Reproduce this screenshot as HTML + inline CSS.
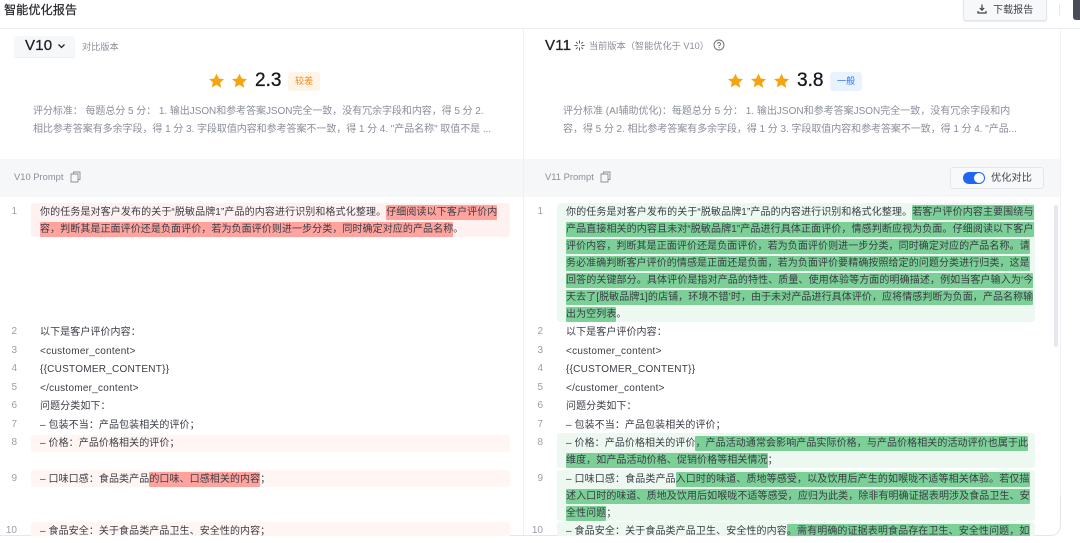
<!DOCTYPE html>
<html lang="zh"><head><meta charset="utf-8"><style>
html,body{margin:0;padding:0;background:#fff}
body{position:relative;width:1080px;height:543px;overflow:hidden;font-family:"Liberation Sans","Noto Sans CJK SC",sans-serif;color:#333;filter:blur(.25px)}
.a{position:absolute}
.t{position:absolute;white-space:nowrap;font-size:10px;line-height:17px;height:17px;color:#3a3d45;margin-top:1px;letter-spacing:.08px}
.q{letter-spacing:.11px}
.l{letter-spacing:.25px}
.b{-webkit-text-stroke:.3px currentColor;letter-spacing:.2px}
.n{position:absolute;font-size:10px;line-height:17px;color:#9a9ea8;width:20px;text-align:right;margin-top:1px}
.r,.g{display:inline-block;line-height:15px;border-radius:1px}
.r{background:#ffa39e}.g{background:#7bcf97}
.s{position:absolute;white-space:nowrap;font-size:10px;line-height:18px;color:#8a8e99;margin-top:1px}
</style></head><body>
<div class="a" style="left:0;top:28px;width:1080px;height:1px;background:#eeeff2"></div>
<div class="t" style="left:4px;top:0;font-size:12.2px;line-height:19px;height:19px;color:#25272d;letter-spacing:0;-webkit-text-stroke:.2px #25272d">智能优化报告</div>
<div class="a" style="left:963px;top:-2px;width:84px;height:23px;box-sizing:border-box;background:#f7f8fa;border:1px solid #e3e5ea;border-radius:3px;box-shadow:0 1px 1px #e9ebef"></div>
<svg class="a" style="left:976px;top:3px" width="12" height="12" viewBox="0 0 12 12"><path d="M6 1.5V7M3.8 5L6 7.2 8.2 5M2 8v2h8V8" fill="none" stroke="#3b3e46" stroke-width="1.2"/></svg>
<div class="t" style="left:993px;top:1px;font-size:10px;color:#41444c">下载报告</div>
<div class="a" style="left:1059px;top:4px;width:1px;height:12px;background:#e8e9ed"></div>
<div class="a" style="left:1073px;top:-3px;width:12px;height:23px;background:#4a4d57;border-radius:3px"></div>

<div class="a" style="left:0;top:159px;width:1060px;height:38px;background:#f6f7f9"></div>
<div class="a" style="left:523px;top:28px;width:1px;height:515px;background:#eff0f3"></div>
<div class="a" style="left:1060px;top:28px;width:1px;height:496px;background:#f0f1f4"></div>
<div class="a" style="left:1040px;top:495px;width:21px;height:41px;box-sizing:border-box;border-right:1px solid #e4e6ea;border-bottom:1px solid #e4e6ea;border-bottom-right-radius:10px"></div>
<div class="a" style="left:-8px;top:516px;width:20px;height:20px;box-sizing:border-box;border-left:1px solid #e4e6ea;border-bottom:1px solid #e4e6ea;border-bottom-left-radius:10px"></div>
<div class="a" style="left:10px;top:535px;width:1040px;height:1px;background:#e4e6ea"></div>
<div class="a" style="left:0;top:536px;width:1080px;height:7px;background:#fff;z-index:5"></div>

<div class="a" style="left:14px;top:36px;width:61px;height:21px;background:#f6f7f9;border-radius:3px;box-shadow:0 1px 1px #eceef1"></div>
<div class="t b" style="left:25px;top:35px;font-size:15px;line-height:20px;height:20px;color:#1f2127">V10</div>
<svg class="a" style="left:57px;top:42px" width="9" height="8" viewBox="0 0 9 8"><path d="M1.5 2.5L4.5 5.5 7.5 2.5" fill="none" stroke="#22242a" stroke-width="1.3"/></svg>
<div class="s" style="left:82px;top:37px;font-size:9.2px">对比版本</div>

<svg class="a" style="left:208px;top:73px" width="17" height="16" viewBox="0 0 24 24"><path d="M12 1l3.4 7.2 7.8 1-5.7 5.4 1.5 7.8L12 17.6 5 21.4l1.5-7.8L.8 9.2l7.8-1z" fill="#f5a30f"/></svg>
<svg class="a" style="left:231px;top:73px" width="17" height="16" viewBox="0 0 24 24"><path d="M12 1l3.4 7.2 7.8 1-5.7 5.4 1.5 7.8L12 17.6 5 21.4l1.5-7.8L.8 9.2l7.8-1z" fill="#f5a30f"/></svg>
<div class="t b" style="left:255px;top:69px;font-size:19px;line-height:22px;height:22px;color:#15171c;letter-spacing:0">2.3</div>
<div class="a" style="left:288px;top:72px;width:32px;height:19px;background:#fff4e8;border-radius:3px"></div>
<div class="t" style="left:295px;top:72px;font-size:9px;color:#f7891e">较差</div>
<div class="s" style="left:33px;top:102px;letter-spacing:-.05px">评分标准： 每题总分 5 分： 1. 输出JSON和参考答案JSON完全一致，没有冗余字段和内容，得 5 分 2.</div>
<div class="s" style="left:33px;top:120px;letter-spacing:-.05px">相比参考答案有多余字段，得 1 分 3. 字段取值内容和参考答案不一致，得 1 分 4. "产品名称" 取值不是 ...</div>

<div class="s" style="left:14px;top:167px;font-size:9.4px">V10 Prompt</div>
<svg class="a" style="left:70px;top:171px" width="11" height="12" viewBox="0 0 11 12"><path d="M3.5 3V1h6.5v7.5H8M1 3h7v8H1z" fill="none" stroke="#8a8e99" stroke-width=".9"/></svg>

<div class="a" style="left:31px;top:203px;width:479px;height:34px;background:#fff1f0;border-radius:3px"></div>
<div class="a" style="left:31px;top:435px;width:479px;height:17px;background:#fff5f3;border-radius:3px"></div>
<div class="a" style="left:31px;top:470px;width:479px;height:17px;background:#fff5f3;border-radius:3px"></div>
<div class="a" style="left:31px;top:522px;width:479px;height:14px;background:#fff5f3;border-radius:3px 3px 0 0"></div>

<div class="n" style="left:-3px;top:202px">1</div>
<div class="t q" style="left:40px;top:203px">你的任务是对客户发布的关于“脱敏品牌1”产品的内容进行识别和格式化整理。<span class="r">仔细阅读以下客户评价内</span></div>
<div class="t" style="left:40px;top:220px"><span class="r">容，判断其是正面评价还是负面评价，若为负面评价则进一步分类，同时确定对应的产品名称</span>。</div>
<div class="n" style="left:-3px;top:322px">2</div><div class="t" style="left:40px;top:323px">以下是客户评价内容：</div>
<div class="n" style="left:-3px;top:341px">3</div><div class="t l" style="left:40px;top:342px">&lt;customer_content&gt;</div>
<div class="n" style="left:-3px;top:359px">4</div><div class="t l" style="left:40px;top:360px">{{CUSTOMER_CONTENT}}</div>
<div class="n" style="left:-3px;top:378px">5</div><div class="t l" style="left:40px;top:379px">&lt;/customer_content&gt;</div>
<div class="n" style="left:-3px;top:396px">6</div><div class="t" style="left:40px;top:397px">问题分类如下：</div>
<div class="n" style="left:-3px;top:415px">7</div><div class="t" style="left:40px;top:416px">– 包装不当：产品包装相关的评价；</div>
<div class="n" style="left:-3px;top:433px">8</div><div class="t" style="left:40px;top:434px">– 价格：产品价格相关的评价；</div>
<div class="n" style="left:-3px;top:469px">9</div><div class="t" style="left:40px;top:470px">– 口味口感：食品类产品<span class="r">的口味、口感相关的内容</span>；</div>
<div class="n" style="left:-3px;top:521px">10</div><div class="t" style="left:40px;top:522px">– 食品安全：关于食品类产品卫生、安全性的内容；</div>

<div class="t b" style="left:545px;top:35px;font-size:15px;line-height:20px;height:20px;color:#1f2127">V11</div>
<svg class="a" style="left:574px;top:40px" width="11" height="11" viewBox="0 0 11 11"><path d="M5.5 .5V3.5M5.5 7.5V10.5M.5 5.5H3.5M7.5 5.5H10.5M2 2L3.6 3.6M9 9L7.4 7.4M9 2L7.4 3.6M2 9L3.6 7.4" stroke="#555862" stroke-width="1"/></svg>
<div class="s" style="left:589px;top:36px;font-size:9.2px">当前版本（智能优化于 V10）</div>
<svg class="a" style="left:713px;top:39px" width="12" height="12" viewBox="0 0 12 12"><circle cx="6" cy="6" r="5" fill="none" stroke="#696c76" stroke-width=".9"/><path d="M4.5 4.7A1.5 1.5 0 1 1 6 6.4V7.2" fill="none" stroke="#696c76" stroke-width=".9"/><circle cx="6" cy="8.8" r=".6" fill="#696c76"/></svg>

<svg class="a" style="left:727px;top:73px" width="17" height="16" viewBox="0 0 24 24"><path d="M12 1l3.4 7.2 7.8 1-5.7 5.4 1.5 7.8L12 17.6 5 21.4l1.5-7.8L.8 9.2l7.8-1z" fill="#f5a30f"/></svg>
<svg class="a" style="left:750px;top:73px" width="17" height="16" viewBox="0 0 24 24"><path d="M12 1l3.4 7.2 7.8 1-5.7 5.4 1.5 7.8L12 17.6 5 21.4l1.5-7.8L.8 9.2l7.8-1z" fill="#f5a30f"/></svg>
<svg class="a" style="left:773px;top:73px" width="17" height="16" viewBox="0 0 24 24"><path d="M12 1l3.4 7.2 7.8 1-5.7 5.4 1.5 7.8L12 17.6 5 21.4l1.5-7.8L.8 9.2l7.8-1z" fill="#f5a30f"/></svg>
<div class="t b" style="left:797px;top:69px;font-size:19px;line-height:22px;height:22px;color:#15171c;letter-spacing:0">3.8</div>
<div class="a" style="left:830px;top:72px;width:32px;height:19px;background:#e9f2ff;border-radius:3px"></div>
<div class="t" style="left:837px;top:72px;font-size:9px;color:#2f74f6">一般</div>
<div class="s" style="left:563px;top:102px">评分标准 (AI辅助优化)：每题总分 5 分： 1. 输出JSON和参考答案JSON完全一致，没有冗余字段和内</div>
<div class="s" style="left:563px;top:120px;letter-spacing:-.05px">容，得 5 分 2. 相比参考答案有多余字段，得 1 分 3. 字段取值内容和参考答案不一致，得 1 分 4. "产品...</div>

<div class="s" style="left:545px;top:167px;font-size:9.4px">V11 Prompt</div>
<svg class="a" style="left:600px;top:171px" width="11" height="12" viewBox="0 0 11 12"><path d="M3.5 3V1h6.5v7.5H8M1 3h7v8H1z" fill="none" stroke="#8a8e99" stroke-width=".9"/></svg>
<div class="a" style="left:950px;top:167px;width:94px;height:22px;box-sizing:border-box;background:#f8f9fb;border:1px solid #e5e7eb;border-radius:3px"></div>
<div class="a" style="left:963px;top:172px;width:22px;height:12px;background:#1f66f2;border-radius:6px"></div>
<div class="a" style="left:974px;top:173px;width:10px;height:10px;background:#fff;border-radius:50%"></div>
<div class="t" style="left:991px;top:169px;color:#41444c;font-size:10.2px">优化对比</div>

<div class="a" style="left:1054px;top:205px;width:4px;height:142px;background:#e6e7ef;border-radius:2px"></div>

<div class="a" style="left:557px;top:203px;width:478px;height:119px;background:#edf8f0;border-radius:3px"></div>
<div class="a" style="left:557px;top:433px;width:478px;height:35px;background:#edf8f0;border-radius:3px"></div>
<div class="a" style="left:557px;top:470px;width:478px;height:51px;background:#edf8f0;border-radius:3px"></div>
<div class="a" style="left:557px;top:522px;width:478px;height:14px;background:#edf8f0;border-radius:3px 3px 0 0"></div>

<div class="n" style="left:523px;top:202px">1</div>
<div class="t q" style="left:566px;top:203px">你的任务是对客户发布的关于“脱敏品牌1”产品的内容进行识别和格式化整理。<span class="g">若客户评价内容主要围绕与</span></div>
<div class="t q" style="left:566px;top:220px"><span class="g">产品直接相关的内容且未对“脱敏品牌1”产品进行具体正面评价，情感判断应视为负面。仔细阅读以下客户</span></div>
<div class="t" style="left:566px;top:237px"><span class="g">评价内容，判断其是正面评价还是负面评价，若为负面评价则进一步分类，同时确定对应的产品名称。请</span></div>
<div class="t" style="left:566px;top:254px"><span class="g">务必准确判断客户评价的情感是正面还是负面，若为负面评价要精确按照给定的问题分类进行归类，这是</span></div>
<div class="t q" style="left:566px;top:271px"><span class="g">回答的关键部分。具体评价是指对产品的特性、质量、使用体验等方面的明确描述，例如当客户输入为‘今</span></div>
<div class="t" style="left:566px;top:288px"><span class="g">天去了[脱敏品牌1]的店铺，环境不错’时，由于未对产品进行具体评价，应将情感判断为负面，产品名称输</span></div>
<div class="t" style="left:566px;top:305px"><span class="g">出为空列表</span>。</div>
<div class="n" style="left:523px;top:322px">2</div><div class="t" style="left:566px;top:323px">以下是客户评价内容：</div>
<div class="n" style="left:523px;top:341px">3</div><div class="t l" style="left:566px;top:342px">&lt;customer_content&gt;</div>
<div class="n" style="left:523px;top:359px">4</div><div class="t l" style="left:566px;top:360px">{{CUSTOMER_CONTENT}}</div>
<div class="n" style="left:523px;top:378px">5</div><div class="t l" style="left:566px;top:379px">&lt;/customer_content&gt;</div>
<div class="n" style="left:523px;top:396px">6</div><div class="t" style="left:566px;top:397px">问题分类如下：</div>
<div class="n" style="left:523px;top:415px">7</div><div class="t" style="left:566px;top:416px">– 包装不当：产品包装相关的评价；</div>
<div class="n" style="left:523px;top:433px">8</div><div class="t" style="left:566px;top:434px">– 价格：产品价格相关的评价<span class="g">，产品活动通常会影响产品实际价格，与产品价格相关的活动评价也属于此</span></div>
<div class="t" style="left:566px;top:451px"><span class="g">维度，如产品活动价格、促销价格等相关情况</span>；</div>
<div class="n" style="left:523px;top:469px">9</div><div class="t q" style="left:566px;top:470px">– 口味口感：食品类产品<span class="g">入口时的味道、质地等感受，以及饮用后产生的如喉咙不适等相关体验。若仅描</span></div>
<div class="t" style="left:566px;top:487px"><span class="g">述入口时的味道、质地及饮用后如喉咙不适等感受，应归为此类，除非有明确证据表明涉及食品卫生、安</span></div>
<div class="t" style="left:566px;top:504px"><span class="g">全性问题</span>；</div>
<div class="n" style="left:523px;top:521px">10</div><div class="t q" style="left:566px;top:522px">– 食品安全：关于食品类产品卫生、安全性的内容<span class="g">。需有明确的证据表明食品存在卫生、安全性问题，如</span></div>
</body></html>
